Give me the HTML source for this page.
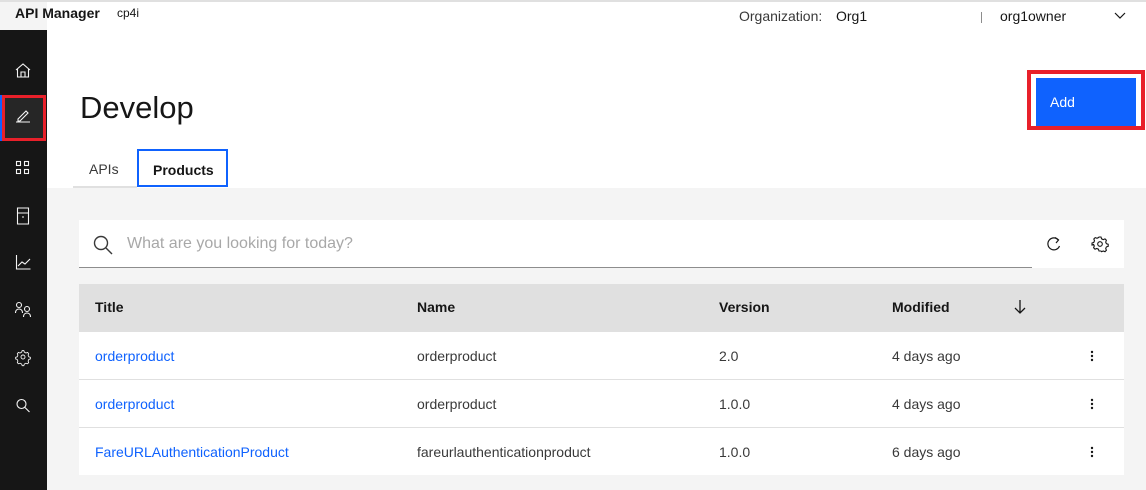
<!DOCTYPE html><html><head><style>
*{margin:0;padding:0;box-sizing:border-box}
body{width:1146px;height:490px;overflow:hidden;background:#fff;font-family:"Liberation Sans",sans-serif;color:#161616;position:relative}
.a{position:absolute}
.t{font-size:14px;white-space:nowrap}
</style></head><body>
<div class="a" style="left:0;top:0;width:1146px;height:2px;background:#e0e0e0"></div>
<div class="a" style="left:0;top:2px;width:47px;height:28px;background:#f4f4f4"></div>
<div class="a t" style="left:15px;top:5px;font-weight:bold;font-size:14px">API Manager</div>
<div class="a" style="left:117px;top:6px;font-size:12px">cp4i</div>
<div class="a t" style="left:739px;top:8px;color:#393939">Organization:</div>
<div class="a t" style="left:836px;top:8px">Org1</div>
<div class="a" style="left:981px;top:12px;width:1px;height:11px;background:#8d8d8d"></div>
<div class="a t" style="left:1000px;top:8px">org1owner</div>
<svg class="a" style="left:1113px;top:10px" width="14" height="10"><path d="M2 3l5 5 5-5" fill="none" stroke="#161616" stroke-width="1.2"/></svg>

<div class="a" style="left:0;top:30px;width:47px;height:460px;background:#161616"></div>
<div class="a" style="left:0;top:95px;width:2px;height:46px;background:#0f62fe"></div>
<div class="a" style="left:2px;top:95px;width:44px;height:46px;background:#262626;border:3px solid #e8202a"></div>
<svg class="a" style="left:0;top:30px" width="47" height="400" fill="none" stroke="#f4f4f4" stroke-width="1.1">
<path d="M16 40l7-6 7 6M17.5 39v8h11v-8M21 47v-5h4v5"/>
<path d="M16 92h14M18 89l8-8 2 2-8 8h-2z"/>
<rect x="16.5" y="131.5" width="4" height="4"/><rect x="24.5" y="131.5" width="4" height="4"/><rect x="16.5" y="139.5" width="4" height="4"/><rect x="24.5" y="139.5" width="4" height="4"/>
<path d="M17.5 178h11v16h-11zM17.5 183h11M22 187h2"/>
<path d="M16.5 225v14h14M18 236l4-4 3 2 5-5"/>
<circle cx="19" cy="275" r="2.5"/><path d="M15.5 283c0-3 2-4 3.5-4s3.5 1 3.5 4"/><circle cx="27" cy="279" r="2.5"/><path d="M23.5 287c0-3 2-4 3.5-4s3.5 1 3.5 4"/>
<g transform="translate(23,327) scale(0.8) translate(-23,-327)"><circle cx="23" cy="327" r="2.5"/><path d="M22 319h2l.7 2 2 1 2-.7 1.4 1.4-.7 2 .8 2 2 .7v2l-2 .7-.8 2 .7 2-1.4 1.4-2-.7-2 1-.7 2h-2l-.7-2-2-1-2 .7-1.4-1.4.7-2-.8-2-2-.7v-2l2-.7.8-2-.7-2 1.4-1.4 2 .7 2-1z"/></g>
<circle cx="21.5" cy="374" r="4.5"/><path d="M25 377.5l4.5 4.5"/>
</svg>

<div class="a" style="left:80px;top:90px;font-size:31px;">Develop</div>
<div class="a" style="right:1px;top:70px;width:118px;height:60px;border:4px solid #e8202a;background:#fff"></div>
<div class="a" style="left:1036px;top:78px;width:100px;height:48px;background:#0f62fe;color:#fff;font-size:14px;padding:16px 0 0 14px">Add</div>

<div class="a" style="left:73px;top:186px;width:64px;height:2px;background:#e0e0e0"></div>
<div class="a t" style="left:89px;top:161px;color:#393939">APIs</div>
<div class="a t" style="left:137px;top:149px;width:91px;height:38px;border:2px solid #0f62fe;font-weight:bold;padding:11px 0 0 14px">Products</div>

<div class="a" style="left:47px;top:188px;width:1099px;height:302px;background:#f4f4f4"></div>
<div class="a" style="left:79px;top:220px;width:1045px;height:48px;background:#fff"></div>
<div class="a" style="left:79px;top:267px;width:953px;height:1px;background:#8d8d8d"></div>
<svg class="a" style="left:92px;top:234px" width="22" height="22" fill="none" stroke="#393939" stroke-width="1.4"><circle cx="9" cy="9" r="6.5"/><path d="M14 14l6 6"/></svg>
<div class="a" style="left:127px;top:235px;font-size:16px;color:#a8a8a8">What are you looking for today?</div>
<svg class="a" style="left:1045px;top:235px" width="18" height="18" fill="none" stroke="#161616" stroke-width="1.2"><path d="M13.5 5A6 6 0 1 0 14.5 11"/><path d="M10 2.5l3.5 2.5-2.5 3"/></svg>
<svg class="a" style="left:1091px;top:235px" width="18" height="18" fill="none" stroke="#161616" stroke-width="1.1"><circle cx="9" cy="9" r="2.3"/><path d="M8 2h2l.6 1.8 1.6.8 1.8-.7 1.4 1.4-.7 1.8.7 1.6 1.8.6v2l-1.8.6-.7 1.6.7 1.8-1.4 1.4-1.8-.7-1.6.7L10 16H8l-.6-1.8-1.6-.7-1.8.7-1.4-1.4.7-1.8-.7-1.6L1 10V8l1.8-.6.7-1.6-.7-1.8L4.2 2.6l1.8.7 1.6-.8z"/></svg>

<div class="a" style="left:79px;top:284px;width:1045px;height:48px;background:#e0e0e0"></div>
<div class="a t" style="left:95px;top:299px;font-weight:bold">Title</div>
<div class="a t" style="left:417px;top:299px;font-weight:bold">Name</div>
<div class="a t" style="left:719px;top:299px;font-weight:bold">Version</div>
<div class="a t" style="left:892px;top:299px;font-weight:bold">Modified</div>
<svg class="a" style="left:1012px;top:298px" width="16" height="18" fill="none" stroke="#161616" stroke-width="1.3"><path d="M8 2v13M3 10l5 5 5-5"/></svg>

<div class="a" style="left:79px;top:332px;width:1045px;height:143px;background:#fff"></div>
<div class="a" style="left:79px;top:379px;width:1045px;height:1px;background:#e0e0e0"></div>
<div class="a" style="left:79px;top:427px;width:1045px;height:1px;background:#e0e0e0"></div>

<div class="a t" style="left:95px;top:348px;color:#0f62fe">orderproduct</div>
<div class="a t" style="left:417px;top:348px;color:#393939">orderproduct</div>
<div class="a t" style="left:719px;top:348px;color:#393939">2.0</div>
<div class="a t" style="left:892px;top:348px;color:#393939">4 days ago</div>
<div class="a t" style="left:95px;top:396px;color:#0f62fe">orderproduct</div>
<div class="a t" style="left:417px;top:396px;color:#393939">orderproduct</div>
<div class="a t" style="left:719px;top:396px;color:#393939">1.0.0</div>
<div class="a t" style="left:892px;top:396px;color:#393939">4 days ago</div>
<div class="a t" style="left:95px;top:444px;color:#0f62fe">FareURLAuthenticationProduct</div>
<div class="a t" style="left:417px;top:444px;color:#393939">fareurlauthenticationproduct</div>
<div class="a t" style="left:719px;top:444px;color:#393939">1.0.0</div>
<div class="a t" style="left:892px;top:444px;color:#393939">6 days ago</div>
<svg class="a" style="left:1089px;top:350px" width="6" height="120" fill="#161616">
<circle cx="3" cy="2" r="1.2"/><circle cx="3" cy="6" r="1.2"/><circle cx="3" cy="10" r="1.2"/>
<circle cx="3" cy="50" r="1.2"/><circle cx="3" cy="54" r="1.2"/><circle cx="3" cy="58" r="1.2"/>
<circle cx="3" cy="98" r="1.2"/><circle cx="3" cy="102" r="1.2"/><circle cx="3" cy="106" r="1.2"/>
</svg>
</body></html>
